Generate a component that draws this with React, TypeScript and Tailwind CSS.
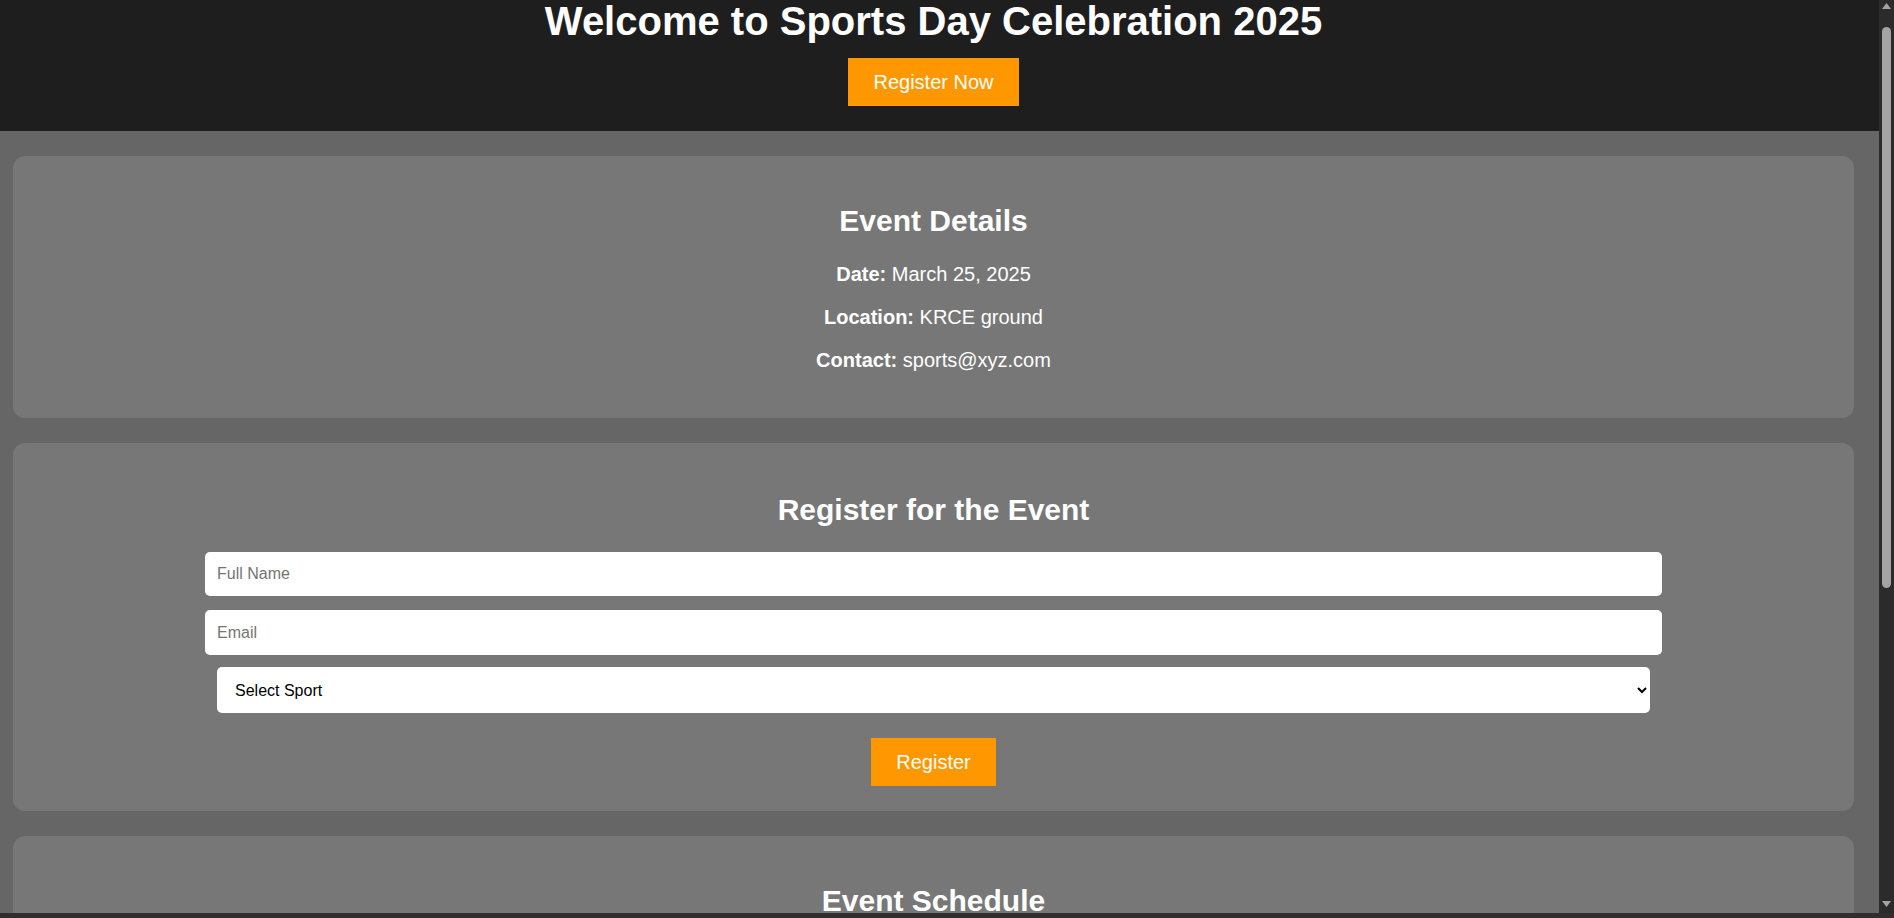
import { useState } from 'react';

const details = [
  { label: 'Date:', value: 'March 25, 2025' },
  { label: 'Location:', value: 'KRCE ground' },
  { label: 'Contact:', value: 'sports@xyz.com' },
];

const sports = ['Football', 'Cricket', 'Basketball', 'Athletics', 'Volleyball'];

const schedule = [
  { time: '09:00 AM', event: 'Opening Ceremony' },
  { time: '10:00 AM', event: '100m Sprint' },
  { time: '11:30 AM', event: 'Football Match' },
  { time: '02:00 PM', event: 'Relay Race' },
  { time: '04:00 PM', event: 'Prize Distribution' },
];

// window scrollbar as it shows in the screenshot
const ScrollBar = () => (
  <div className="w-[15px] bg-[#2b2b2b] flex flex-col items-center pt-[3px] pb-[6px]">
    <svg width="9" height="6" viewBox="0 0 9 6">
      <path d="M0 6 L4.5 0 L9 6 Z" fill="#a3a3a3" />
    </svg>
    <div className="mt-[18px] h-[561px] w-[9px] rounded-full bg-[#a3a3a3]" />
    <div className="flex-1" />
    <svg width="9" height="6" viewBox="0 0 9 6">
      <path d="M0 0 L9 0 L4.5 6 Z" fill="#a3a3a3" />
    </svg>
  </div>
);

const App = () => {
  const [name, setName] = useState('');
  const [email, setEmail] = useState('');
  const [sport, setSport] = useState('');

  return (
    <div className="h-screen flex flex-col bg-[#2e2e2e] font-['Liberation_Sans',Arial,sans-serif] text-white">
      <div className="flex-1 min-h-0 flex">
        <div className="flex-1 overflow-hidden bg-[#666666]">
          <header className="bg-[#1e1e1e] pl-[13px] pr-[25px] pb-[25px] flex flex-col items-center">
            <h1 className="text-[40px] leading-[42px] font-bold">Welcome to Sports Day Celebration 2025</h1>
            <button className="mt-[16px] bg-[#ff9800] text-white text-[20px] leading-[24px] px-[25px] py-[12px]">
              Register Now
            </button>
          </header>

          <main className="pl-[13px] pr-[25px] pt-[25px] pb-[25px] flex flex-col gap-[25px]">
            <section className="bg-[#777777] rounded-[12px] pt-[48px] pb-[46px] flex flex-col items-center">
              <h2 className="text-[30px] leading-[34px] font-bold mb-[25px]">Event Details</h2>
              <div className="flex flex-col items-center gap-[20px]">
                {details.map((d) => (
                  <p key={d.label} className="text-[20px] leading-[23px]">
                    <strong>{d.label}</strong> {d.value}
                  </p>
                ))}
              </div>
            </section>

            <section className="bg-[#777777] rounded-[12px] pt-[50px] pb-[25px] flex flex-col items-center">
              <h2 className="text-[30px] leading-[34px] font-bold mb-[25px]">Register for the Event</h2>
              <form className="flex flex-col items-center" onSubmit={(e) => e.preventDefault()}>
                <input
                  type="text"
                  placeholder="Full Name"
                  value={name}
                  onChange={(e) => setName(e.target.value)}
                  className="w-[1457px] h-[44px] px-[12px] bg-white text-black text-[16px] rounded-[5px] placeholder:text-[#757575] outline-none"
                />
                <input
                  type="email"
                  placeholder="Email"
                  value={email}
                  onChange={(e) => setEmail(e.target.value)}
                  className="mt-[14px] w-[1457px] h-[45px] px-[12px] bg-white text-black text-[16px] rounded-[5px] placeholder:text-[#757575] outline-none"
                />
                <select
                  value={sport}
                  onChange={(e) => setSport(e.target.value)}
                  className="mt-[12px] w-[1433px] h-[46px] pl-[14px] pr-[6px] bg-white text-black text-[16px] rounded-[5px] outline-none"
                >
                  <option value="">Select Sport</option>
                  {sports.map((s) => (
                    <option key={s} value={s}>{s}</option>
                  ))}
                </select>
                <button type="submit" className="mt-[25px] bg-[#ff9800] text-white text-[20px] leading-[24px] px-[25px] py-[12px]">
                  Register
                </button>
              </form>
            </section>

            <section className="bg-[#777777] rounded-[12px] pt-[48px] pb-[46px] flex flex-col items-center">
              <h2 className="text-[30px] leading-[34px] font-bold mb-[25px]">Event Schedule</h2>
              <div className="flex flex-col items-center gap-[20px]">
                {schedule.map((s) => (
                  <p key={s.time} className="text-[20px] leading-[23px]">
                    <strong>{s.time}</strong> - {s.event}
                  </p>
                ))}
              </div>
            </section>
          </main>
        </div>
        <ScrollBar />
      </div>
      <div className="h-[5px] bg-[#2e2e2e]" />
    </div>
  );
};

export default App;
